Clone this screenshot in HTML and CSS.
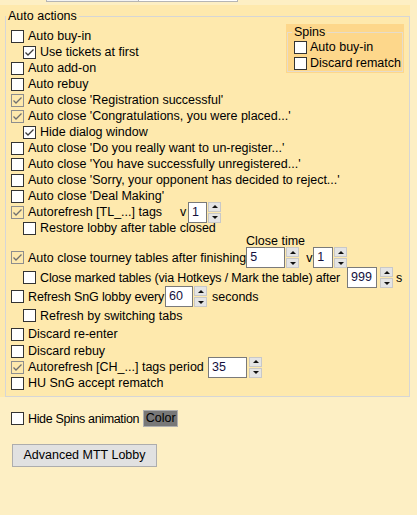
FILE: index.html
```html
<!DOCTYPE html>
<html>
<head>
<meta charset="utf-8">
<link rel="stylesheet" href="styles.css">
</head>
<body>
<div class="strip"><span class="strip-gap"></span><span class="strip-tab"></span><span class="strip-tab white"></span></div>
<div class="panel">
  <fieldset class="group">
    <legend class="legend">Auto actions</legend>
    <div class="spins">
      <fieldset class="spins-group">
        <legend class="spins-legend">Spins</legend>
        <div class="row"><span class="cb"></span><span class="lbl">Auto buy-in</span></div>
        <div class="row"><span class="cb"></span><span class="lbl">Discard rematch</span></div>
      </fieldset>
    </div>
    <div class="row"><span class="cb"></span><span class="lbl">Auto buy-in</span></div>
    <div class="row sub"><span class="cb"><svg viewBox="0 0 11 11" class="tick"><path d="M1.5 5.5 L4 8 L9.5 2.5"/></svg></span><span class="lbl">Use tickets at first</span></div>
    <div class="row"><span class="cb"></span><span class="lbl">Auto add-on</span></div>
    <div class="row"><span class="cb"></span><span class="lbl">Auto rebuy</span></div>
    <div class="row"><span class="cb grey"><svg viewBox="0 0 11 11" class="tick"><path d="M1.5 5.5 L4 8 L9.5 2.5"/></svg></span><span class="lbl">Auto close 'Registration successful'</span></div>
    <div class="row"><span class="cb grey"><svg viewBox="0 0 11 11" class="tick"><path d="M1.5 5.5 L4 8 L9.5 2.5"/></svg></span><span class="lbl">Auto close 'Congratulations, you were placed...'</span></div>
    <div class="row sub"><span class="cb"><svg viewBox="0 0 11 11" class="tick"><path d="M1.5 5.5 L4 8 L9.5 2.5"/></svg></span><span class="lbl">Hide dialog window</span></div>
    <div class="row"><span class="cb"></span><span class="lbl">Auto close 'Do you really want to un-register...'</span></div>
    <div class="row"><span class="cb"></span><span class="lbl">Auto close 'You have successfully unregistered...'</span></div>
    <div class="row"><span class="cb"></span><span class="lbl">Auto close 'Sorry, your opponent has decided to reject...'</span></div>
    <div class="row"><span class="cb"></span><span class="lbl">Auto close 'Deal Making'</span></div>
    <div class="row"><span class="cb grey"><svg viewBox="0 0 11 11" class="tick"><path d="M1.5 5.5 L4 8 L9.5 2.5"/></svg></span><span class="lbl w-tl">Autorefresh [TL_...] tags</span><span class="v">v</span><span class="inp w19">1</span><span class="spin ml1"><span class="sb"><i class="up"></i></span><span class="sb"><i class="dn"></i></span></span></div>
    <div class="row sub"><span class="cb"></span><span class="lbl">Restore lobby after table closed</span></div>
    <div class="caption">Close time</div>
    <div class="row h21"><span class="cb grey"><svg viewBox="0 0 11 11" class="tick"><path d="M1.5 5.5 L4 8 L9.5 2.5"/></svg></span><span class="lbl w-tour">Auto close tourney tables after finishing</span><span class="inp w39">5</span><span class="spin ml1"><span class="sb"><i class="up"></i></span><span class="sb"><i class="dn"></i></span></span><span class="v v2">v</span><span class="inp w20">1</span><span class="spin ml1"><span class="sb"><i class="up"></i></span><span class="sb"><i class="dn"></i></span></span></div>
    <div class="row sub h19"><span class="cb"></span><span class="lbl w-mark tight">Close marked tables (via Hotkeys / Mark the table) after</span><span class="inp w30">999</span><span class="spin ml3"><span class="sb"><i class="up"></i></span><span class="sb"><i class="dn"></i></span></span><span class="unit ml3">s</span></div>
    <div class="row h19"><span class="cb"></span><span class="lbl w-sng tight">Refresh SnG lobby every</span><span class="inp w28">60</span><span class="spin ml1"><span class="sb"><i class="up"></i></span><span class="sb"><i class="dn"></i></span></span><span class="unit ml5">seconds</span></div>
    <div class="row sub h19"><span class="cb"></span><span class="lbl">Refresh by switching tabs</span></div>
    <div class="row h18"><span class="cb"></span><span class="lbl">Discard re-enter</span></div>
    <div class="row"><span class="cb"></span><span class="lbl">Discard rebuy</span></div>
    <div class="row"><span class="cb grey"><svg viewBox="0 0 11 11" class="tick"><path d="M1.5 5.5 L4 8 L9.5 2.5"/></svg></span><span class="lbl w-ch">Autorefresh [CH_...] tags period</span><span class="inp w39">35</span><span class="spin ml2"><span class="sb"><i class="up"></i></span><span class="sb"><i class="dn"></i></span></span></div>
    <div class="row"><span class="cb"></span><span class="lbl">HU SnG accept rematch</span></div>
  </fieldset>
</div>
<div class="row hide-row"><span class="cb"></span><span class="lbl w-hide">Hide Spins animation</span><span class="color-btn">Color</span></div>
<div class="adv-btn">Advanced MTT Lobby</div>
</body>
</html>
```

FILE: styles.css
```css
html, body {
  margin: 0;
  padding: 0;
  background: #fdefc4;
  font-family: "Liberation Sans", Arial, sans-serif;
  font-size: 12.5px;
  color: #000;
}
.strip {
  display: flex;
  height: 2px;
}
.strip-gap { width: 46px; }
.strip-tab {
  width: 91px;
  background: #f3f3f3;
  border-left: 1px solid #b5b5b5;
  border-bottom: 1px solid #b5b5b5;
}
.strip-tab.white {
  width: 98px;
  background: #fff;
  border-right: 1px solid #b5b5b5;
}
.panel {
  margin-top: 3px;
  width: 410px;
  height: 392px;
  box-sizing: border-box;
  background: #fee9ad;
  padding: 5px 0 0 5px;
}
.group {
  margin: 0;
  box-sizing: border-box;
  width: 405px;
  height: 387px;
  border: 1px solid #d6d6d6;
  padding: 5px 5px 5px 5px;
  min-width: 0;
}
.legend {
  margin-left: -5px;
  padding: 0 2px;
  height: 13px;
  line-height: 13px;
}
.row {
  display: flex;
  align-items: center;
  height: 16px;
  line-height: 16px;
  white-space: nowrap;
}
.row.sub { padding-left: 12px; }
.row.h21 { height: 21px; }
.row.h19 { height: 19px; }
.row.h18 { height: 18px; }
.cb {
  flex: none;
  width: 13px;
  height: 13px;
  box-sizing: border-box;
  border: 1px solid #333;
  background: #fff;
  display: flex;
  align-items: center;
  justify-content: center;
}
.cb.grey {
  border-color: #8e8e8e;
  background: transparent;
}
.tick {
  width: 11px;
  height: 11px;
  fill: none;
  stroke: #3c3c3c;
  stroke-width: 1.3;
}
.cb.grey .tick { stroke: #707070; }
.lbl {
  margin-left: 4px;
  flex: none;
}
.tight { letter-spacing: -0.15px; }
.w-tl { min-width: 152px; }
.w-tour { min-width: 218px; }
.w-mark { min-width: 307px; }
.w-sng { min-width: 137px; }
.w-ch { min-width: 180px; }
.w-hide {
  margin-right: 4px;
  letter-spacing: -0.35px;
}
.v {
  flex: none;
  width: 8px;
}
.v.v2 {
  margin-left: 7px;
  width: 7px;
}
.inp {
  flex: none;
  box-sizing: border-box;
  height: 21px;
  line-height: 19px;
  border: 1px solid #7a7a7a;
  background: #fff;
  padding-left: 3px;
  color: #14103c;
}
.w19 { width: 19px; }
.w20 { width: 20px; }
.w28 { width: 28px; }
.w30 { width: 30px; }
.w39 { width: 39px; }
.spin {
  flex: none;
  width: 13px;
  height: 21px;
  display: flex;
  flex-direction: column;
  gap: 1px;
}
.ml1 { margin-left: 1px; }
.ml2 { margin-left: 2px; }
.ml3 { margin-left: 3px; }
.ml5 { margin-left: 5px; }
.sb {
  flex: 1;
  box-sizing: border-box;
  background: #e4e4e4;
  border: 1px solid #c8c8c8;
  display: flex;
  align-items: center;
  justify-content: center;
}
.up, .dn {
  display: block;
  width: 0;
  height: 0;
  border-left: 3px solid transparent;
  border-right: 3px solid transparent;
}
.up { border-bottom: 3px solid #111; }
.dn { border-top: 3px solid #111; }
.unit { flex: none; }
.caption {
  height: 11px;
  line-height: 11px;
  padding-left: 235px;
  white-space: nowrap;
}
.spins {
  float: right;
  margin-top: -4px;
  width: 118px;
  box-sizing: border-box;
  background: #fdd78b;
  padding: 2px 1px 1px 1px;
}
.spins-group {
  margin: 0;
  border: 1px solid #e6dccb;
  padding: 0 0 0 6px;
  min-width: 0;
}
.spins-legend {
  margin-left: -2px;
  padding: 0 2px;
  height: 13px;
  line-height: 13px;
}
.spins .row .lbl { margin-left: 3px; }
.hide-row {
  margin-top: 13px;
  padding-left: 11px;
  height: 17px;
}
.color-btn {
  flex: none;
  box-sizing: border-box;
  width: 35px;
  height: 17px;
  line-height: 15px;
  background: #787878;
  border: 1px solid #b0b0b0;
  text-align: center;
}
.adv-btn {
  margin: 17px 0 0 12px;
  box-sizing: border-box;
  width: 145px;
  height: 23px;
  line-height: 21px;
  background: #e1e1e1;
  border: 1px solid #adadad;
  text-align: center;
  white-space: nowrap;
}
```
